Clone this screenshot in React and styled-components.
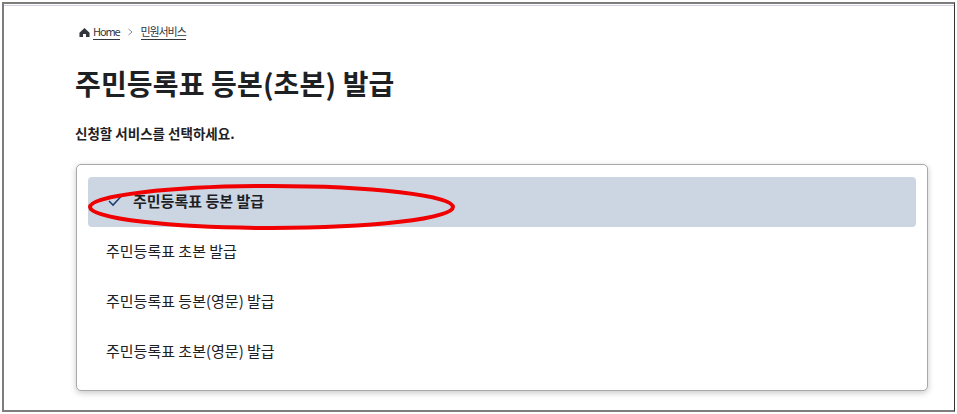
import React from 'react';
import styled, { createGlobalStyle } from 'styled-components';

const Global = createGlobalStyle`
  html, body {
    margin: 0;
    padding: 0;
    background: #fff;
  }
  body {
    font-family: "Noto Sans CJK KR", "Noto Sans", sans-serif;
    color: #1e2124;
  }
`;

const Frame = styled.div`
  box-sizing: border-box;
  width: 953px;
  height: 410px;
  margin: 2px 0 0 2px;
  border-top: 2px solid #7d7d7d;
  border-left: 2px solid #7d7d7d;
  border-right: 1px solid #333;
  border-bottom: 2px solid #7d7d7d;
  overflow: hidden;
`;

const TopLine = styled.div`
  height: 1px;
  margin-top: 1px;
  background: #d0d0e0;
`;

const Content = styled.div`
  padding: 16px 24px 0 71px;
`;

const Breadcrumb = styled.nav`
  display: flex;
  align-items: center;
  height: 20px;
  padding-left: 4px;
  font-size: 11px;
  letter-spacing: -1.1px;
  color: #33363d;
`;

const Crumb = styled.a`
  display: block;
  line-height: 15px;
  border-bottom: 1px solid #33363d;
`;

const HomeIcon = styled.svg`
  width: 11px;
  height: 11px;
  margin-right: 3px;
  fill: #33363d;
`;

const Chevron = styled.svg`
  width: 7px;
  height: 8px;
  margin: 0 7px;
  fill: none;
  stroke: #8a8f98;
  stroke-width: 1;
`;

const Title = styled.h1`
  margin: 21px 0 0;
  font-size: 28px;
  line-height: 40px;
  font-weight: 700;
  letter-spacing: 0.15px;
  color: #1e2124;
`;

const Lead = styled.p`
  margin: 20px 0 0;
  font-size: 13.5px;
  line-height: 20px;
  font-weight: 700;
  color: #1e2124;
`;

const Listbox = styled.ul`
  position: relative;
  list-style: none;
  margin: 21px 2px 0 1px;
  padding: 12px 11px 12px 11px;
  height: 227px;
  box-sizing: border-box;
  border: 1px solid #a8a8a8;
  border-radius: 5px;
  box-shadow: 0 2px 6px rgba(0, 0, 0, 0.22);
  background: #fff;
`;

const Option = styled.li`
  box-sizing: border-box;
  display: flex;
  align-items: center;
  gap: 11px;
  height: 50px;
  padding: 0 0 3px ${({ $selected }) => ($selected ? '20px' : '18px')};
  border-radius: 4px;
  font-size: 15px;
  font-weight: ${({ $selected }) => ($selected ? 700 : 400)};
  background: ${({ $selected }) => ($selected ? '#ccd6e3' : 'transparent')};
  color: #1e2124;
`;

const Check = styled.svg`
  width: 14px;
  height: 12px;
  fill: none;
  stroke: #1f3f6e;
  stroke-width: 1.6;
`;

const Marker = styled.svg`
  position: absolute;
  left: 85px;
  top: 181px;
  width: 374px;
  height: 52px;
  fill: none;
  stroke: #f00000;
  stroke-width: 4;
  pointer-events: none;
`;

const options = [
  '주민등록표 등본 발급',
  '주민등록표 초본 발급',
  '주민등록표 등본(영문) 발급',
  '주민등록표 초본(영문) 발급',
];

export default function App() {
  return (
    <>
      <Global />
      <Frame>
        <TopLine />
        <Content>
          <Breadcrumb>
            <HomeIcon viewBox="0 0 12 12">
              <path d="M6 1 L11.5 6.2 V11 H7.6 V7.6 H4.4 V11 H0.5 V6.2 Z" />
            </HomeIcon>
            <Crumb>Home</Crumb>
            <Chevron viewBox="0 0 7 8">
              <path d="M1.5 1 L5 4 L1.5 7" />
            </Chevron>
            <Crumb>민원서비스</Crumb>
          </Breadcrumb>
          <Title>주민등록표 등본(초본) 발급</Title>
          <Lead>신청할 서비스를 선택하세요.</Lead>
          <Listbox>
            {options.map((label, i) => (
              <Option key={label} $selected={i === 0}>
                {i === 0 && (
                  <Check viewBox="0 0 14 12">
                    <path d="M1 6 L5 10 L13 1.5" />
                  </Check>
                )}
                {label}
              </Option>
            ))}
          </Listbox>
        </Content>
      </Frame>
      <Marker viewBox="0 0 374 52">
        <ellipse cx="186.5" cy="26" rx="181.5" ry="21" />
      </Marker>
    </>
  );
}
